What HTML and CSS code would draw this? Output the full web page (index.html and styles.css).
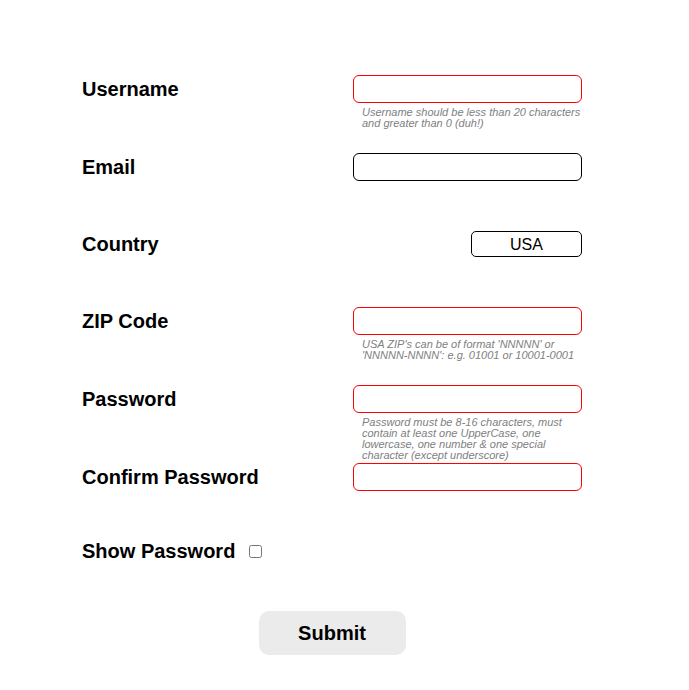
FILE: index.html
```html
<!DOCTYPE html>
<html>
<head>
<meta charset="utf-8">
<link rel="stylesheet" href="styles.css">
</head>
<body>
<form class="form">
  <div class="row">
    <label class="label">Username</label>
    <div class="field">
      <input class="input invalid" type="text">
      <p class="hint">Username should be less than 20 characters and greater than 0 (duh!)</p>
    </div>
  </div>
  <div class="row">
    <label class="label">Email</label>
    <div class="field">
      <input class="input" type="email">
    </div>
  </div>
  <div class="row row-country">
    <label class="label label-country">Country</label>
    <div class="field field-right">
      <select class="select"><option>USA</option></select>
    </div>
  </div>
  <div class="row">
    <label class="label">ZIP Code</label>
    <div class="field">
      <input class="input invalid" type="text">
      <p class="hint">USA ZIP's can be of format 'NNNNN' or 'NNNNN-NNNN': e.g. 01001 or 10001-0001</p>
    </div>
  </div>
  <div class="row">
    <label class="label">Password</label>
    <div class="field">
      <input class="input invalid" type="password">
      <p class="hint">Password must be 8-16 characters, must contain at least one UpperCase, one lowercase, one number &amp; one special character (except underscore)</p>
    </div>
  </div>
  <div class="row">
    <label class="label">Confirm Password</label>
    <div class="field">
      <input class="input invalid" type="password">
    </div>
  </div>
  <div class="show-row">
    <label class="label">Show Password</label>
    <input class="check" type="checkbox">
  </div>
  <div class="actions">
    <button class="submit" type="button">Submit</button>
  </div>
</form>
</body>
</html>
```
FILE: styles.css
```css
html, body {
  margin: 0;
  padding: 0;
  background: #fff;
}
body {
  font-family: "Liberation Sans", Arial, sans-serif;
  color: #000;
}
.form {
  width: 500px;
  margin: 0;
  padding: 75px 0 0 82px;
}
.row {
  height: 78px;
  display: flex;
  justify-content: space-between;
  align-items: flex-start;
}
.row-country {
  height: 76px;
}
.label {
  font-size: 20px;
  font-weight: bold;
  line-height: 28px;
}
.label-country {
  line-height: 26px;
}
.field {
  width: 229px;
  display: flex;
  flex-direction: column;
}
.field-right {
  align-items: flex-end;
}
.input {
  box-sizing: border-box;
  width: 229px;
  height: 28px;
  margin: 0;
  border: 1px solid #000;
  border-radius: 6px;
  padding: 0 8px;
  font-size: 16px;
  font-family: "Liberation Sans", Arial, sans-serif;
  outline: none;
  background: #fff;
}
.input.invalid {
  border-color: #f00;
}
.hint {
  margin: 4px 0 0 9px;
  font-size: 11px;
  line-height: 11px;
  font-style: italic;
  color: #808080;
}
.select {
  box-sizing: border-box;
  width: 111px;
  height: 26px;
  margin: 0;
  border: 1px solid #000;
  border-radius: 5px;
  background: #fff;
  font-family: "Liberation Sans", Arial, sans-serif;
  font-size: 16px;
  text-align: center;
  text-align-last: center;
  appearance: none;
  -webkit-appearance: none;
  color: #000;
  padding: 0;
}
.show-row {
  display: flex;
  align-items: center;
  gap: 14px;
  height: 20px;
}
.show-row .label {
  line-height: 20px;
}
.check {
  margin: 0;
  width: 13px;
  height: 13px;
}
.actions {
  display: flex;
  justify-content: center;
  margin-top: 50px;
}
.submit {
  width: 147px;
  height: 44px;
  border: none;
  border-radius: 10px;
  background: #ebebeb;
  font-family: "Liberation Sans", Arial, sans-serif;
  font-size: 20px;
  font-weight: bold;
  color: #000;
}
```
